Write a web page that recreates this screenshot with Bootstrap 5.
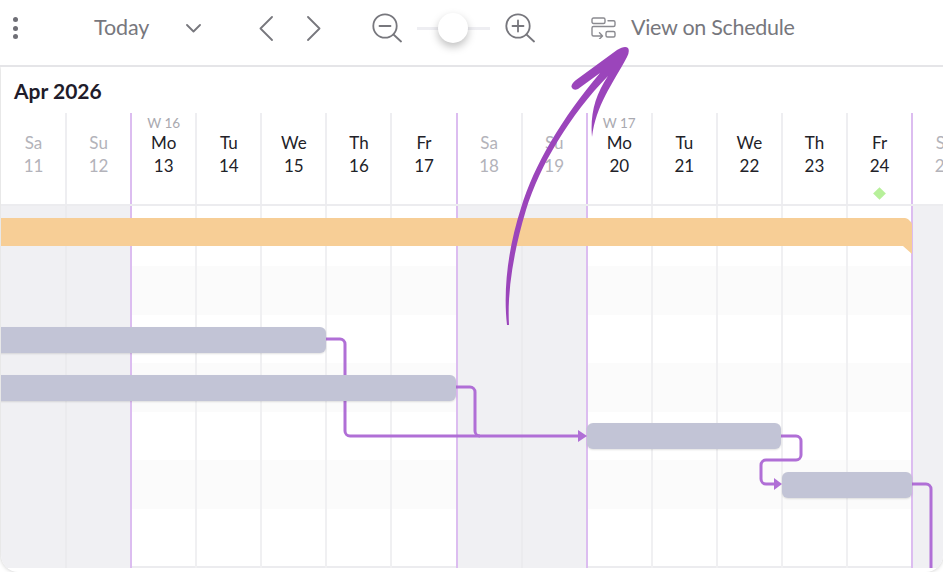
<!DOCTYPE html>
<html lang="en">
<head>
<meta charset="utf-8">
<title>Gantt</title>
<link href="https://cdn.jsdelivr.net/npm/bootstrap@5.3.0/dist/css/bootstrap.min.css" rel="stylesheet">
<style>
html,body{margin:0;height:572px;overflow:hidden;background:#fff;font-family:"Lato","Liberation Sans",sans-serif;}
.app{position:relative;width:943px;height:572px;overflow:hidden;}
.tools{height:67px;padding-bottom:9px;border-bottom:2px solid #e5e5e8;color:#77777d;position:relative;background:#fff;z-index:1;}
.tool-text{font-size:21.5px;color:#77777d;line-height:1;letter-spacing:-.1px;}
.tools svg{display:block;fill:none;stroke:#77777d;stroke-width:1.8;stroke-linecap:round;stroke-linejoin:round;}
.dots{margin-left:13px;width:7px;}
.dots i{display:block;width:5px;height:5px;border-radius:50%;background:#6f6f76;margin:3.5px 0;}
.today{margin-left:74px;width:55px;}
.chev{margin-left:37px;}
.prev{margin-left:58px;}
.next{margin-left:34px;}
.zoomout{margin-left:51px;}
.slider{margin-left:15px;width:73px;height:3px;background:#eeeef2;position:relative;}
.thumb{position:absolute;left:21px;top:-14px;width:30px;height:30px;border-radius:50%;background:#fff;box-shadow:0 4px 9px rgba(0,0,0,.25);}
.zoomin{margin-left:15px;}
.sched{margin-left:56px;}
.view{margin-left:15px;letter-spacing:-.3px;}
.tools .sched{stroke:#8a8a90;stroke-width:1.4;}
.sheet{height:505px;margin-left:1px;border-radius:0 0 17px 17px;overflow:hidden;box-shadow:0 0 4px rgba(0,0,0,.22);background:#fff;}
.month{height:46px;padding-left:13px;padding-top:12px;font-size:21px;font-weight:700;line-height:24px;color:#1f1c2b;}
.daycols{height:93px;border-bottom:2px solid #ececef;margin-left:-1px;}
.daycol{flex:0 0 65.08px;border-left:2px solid #eeeef1;padding-top:1px;text-align:center;font-size:17px;line-height:23px;color:#222228;margin-left:0;position:relative;}
.daycol:first-child{border-left:0;padding-left:2px;}
.daycol.off{color:#b3b3ba;}
.daycol.wk{border-left-color:#dcbdf0;}
.wlabel{display:block;height:17px;font-size:13.5px;line-height:18px;color:#a9a9b0;}
.nolabel{display:block;height:17px;}
.mile{width:9px;height:9px;background:#b7f09a;transform:rotate(45deg);margin:12px auto 0;}
.plan{display:grid;height:362px;margin-left:-1px;border-bottom:2px solid #ececef;}
.plan>*{grid-area:1/1;}
.stripe-first{height:60px;}
.stripe{height:48.5px;}
.stripe.alt{background:#fbfbfb;}
.gridcols{height:362px;}
.gcol{flex:0 0 65.08px;border-left:2px solid #f0f0f2;}
.gcol:first-child{border-left:0;}
.gcol.off{background:#f0f0f3;border-left-color:#ebebee;}
.gcol.wk{border-left-color:#dcbdf0;}
.canvas{position:relative;height:362px;}
.canvas svg{position:absolute;left:0;top:0;overflow:visible;}
.canvas .summary{top:12px;}
.link{fill:none;stroke:#b06fd6;stroke-width:3;stroke-linejoin:round;}
.tip{fill:#b06fd6;}
.bar{position:absolute;height:26px;background:#c2c4d6;border-radius:6px;box-shadow:0 1px 2px rgba(0,0,0,.12);}
.bar.s1{left:-6px;top:121px;width:332px;}
.bar.s2{left:-6px;top:169px;width:462px;}
.bar.s3{left:587px;top:217px;width:194px;}
.bar.s4{left:782px;top:266px;width:130px;}
.sweep{position:absolute;left:0;top:0;pointer-events:none;z-index:2;}
</style>
</head>
<body>
<div class="app">
  <header class="tools d-flex align-items-center">
    <div class="dots" aria-label="More"><i></i><i></i><i></i></div>
    <span class="tool-text today">Today</span>
    <svg class="chev" width="15" height="9" viewBox="0 0 15 9"><path d="M1 1l6.500 6.500L14 1"/></svg>
    <svg class="prev" width="14" height="25" viewBox="0 0 14 25"><path d="M13 1L1.500 12.500 13 24"/></svg>
    <svg class="next" width="14" height="25" viewBox="0 0 14 25"><path d="M1 1l11.500 11.500L1 24"/></svg>
    <svg class="zoomout" width="30" height="30" viewBox="0 0 30 30"><circle cx="13" cy="13" r="11.700"/><path d="M7.500 13h11M21.500 21.500L29 28.500"/></svg>
    <div class="slider"><div class="thumb"></div></div>
    <svg class="zoomin" width="30" height="30" viewBox="0 0 30 30"><circle cx="13" cy="13" r="11.700"/><path d="M7.500 13h11M13 7.500v11M21.500 21.500L29 28.500"/></svg>
    <svg class="sched" width="25" height="22" viewBox="0 0 25 22"><rect x="1" y="1" width="13" height="5.500" rx="1.500"/><rect x="15" y="14.500" width="9" height="5.500" rx="1.500"/><path d="M17 3.700h5.500a1.500 1.500 0 0 1 1.500 1.500v2.800a1.500 1.500 0 0 1-1.500 1.500H2.500A1.500 1.500 0 0 0 1 11v6.500A1.500 1.500 0 0 0 2.500 19H11M8.500 15.800l3 3.200-3 3"/></svg>
    <span class="tool-text view">View on Schedule</span>
  </header>
  <section class="sheet">
    <div class="month">Apr 2026</div>
    <div class="daycols d-flex">
      <div class="daycol off"><span class="nolabel"></span>Sa<br>11</div>
      <div class="daycol off"><span class="nolabel"></span>Su<br>12</div>
      <div class="daycol wk"><span class="wlabel">W 16</span>Mo<br>13</div>
      <div class="daycol"><span class="nolabel"></span>Tu<br>14</div>
      <div class="daycol"><span class="nolabel"></span>We<br>15</div>
      <div class="daycol"><span class="nolabel"></span>Th<br>16</div>
      <div class="daycol"><span class="nolabel"></span>Fr<br>17</div>
      <div class="daycol off wk"><span class="nolabel"></span>Sa<br>18</div>
      <div class="daycol off"><span class="nolabel"></span>Su<br>19</div>
      <div class="daycol wk"><span class="wlabel">W 17</span>Mo<br>20</div>
      <div class="daycol"><span class="nolabel"></span>Tu<br>21</div>
      <div class="daycol"><span class="nolabel"></span>We<br>22</div>
      <div class="daycol"><span class="nolabel"></span>Th<br>23</div>
      <div class="daycol"><span class="nolabel"></span>Fr<br>24<div class="mile"></div></div>
      <div class="daycol off wk"><span class="nolabel"></span>Sa<br>25</div>
    </div>
    <div class="plan">
      <div class="stripes">
        <div class="stripe-first"></div>
        <div class="stripe alt"></div>
        <div class="stripe"></div>
        <div class="stripe alt"></div>
        <div class="stripe"></div>
        <div class="stripe alt"></div>
      </div>
      <div class="gridcols d-flex">
        <div class="gcol off"></div><div class="gcol off"></div><div class="gcol wk"></div><div class="gcol"></div><div class="gcol"></div><div class="gcol"></div><div class="gcol"></div><div class="gcol off wk"></div><div class="gcol off"></div><div class="gcol wk"></div><div class="gcol"></div><div class="gcol"></div><div class="gcol"></div><div class="gcol"></div><div class="gcol off wk"></div>
      </div>
      <div class="canvas">
        <svg class="summary" width="943" height="40" viewBox="0 0 943 40"><path fill="#f7ce96" d="M0 0H905q2 0 3.500 1.500l2.500 2.500q1 1 1 3V36l-9-8H0z"/></svg>
        <svg width="943" height="362" viewBox="0 0 943 362">
          <path class="link" d="M326 133H340a5 5 0 0 1 5 5V225a5 5 0 0 0 5 5H580"/>
          <path class="link" d="M456 181H470a5 5 0 0 1 5 5V225a5 5 0 0 0 5 5"/>
          <path class="tip" d="M578 224l9 6-9 6z"/>
          <path class="link" d="M781 230H796a5 5 0 0 1 5 5V249a5 5 0 0 1-5 5H766a5 5 0 0 0-5 5V273a5 5 0 0 0 5 5H775"/>
          <path class="tip" d="M774 272l8 6-8 6z"/>
          <path class="link" d="M912 278H926a5 5 0 0 1 5 5V362"/>
        </svg>
        <div class="bar s1"></div>
        <div class="bar s2"></div>
        <div class="bar s3"></div>
        <div class="bar s4"></div>
      </div>
    </div>
  </section>
  <svg class="sweep" width="943" height="572" viewBox="0 0 943 572"><path fill="#9b45bb" d="M507 325C503 290 508 248 521 208C534 165 562 118 600 73L578 89Q573 91 571.500 87Q571 84 576 80L617 50Q625 45 628 48Q630 51 627 57C612 85 596 105 592 137C590 115 595 95 608 76C570 115 540 165 526 210C514 250 507 290 509 325Z"/></svg>
</div>
<script src="https://cdn.jsdelivr.net/npm/bootstrap@5.3.0/dist/js/bootstrap.bundle.min.js"></script>
</body>
</html>
